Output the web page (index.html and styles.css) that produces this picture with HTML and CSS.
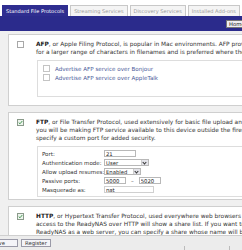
FILE: index.html
```html
<!DOCTYPE html>
<html>
<head>
<meta charset="utf-8">
<link rel="stylesheet" href="styles.css">
</head>
<body>
<div class="tabs">
  <div class="tab active">Standard File Protocols</div>
  <div class="tab">Streaming Services</div>
  <div class="tab">Discovery Services</div>
  <div class="tab">Installed Add-ons</div>
</div>
<div class="bar"><button class="home">Home</button></div>
<div class="content">
  <div class="card afp">
    <span class="cb"></span>
    <div class="body">
      <p class="desc"><b>AFP</b>, or Apple Filing Protocol, is popular in Mac environments. AFP provides support<br>for a larger range of characters in filenames and is preferred where the clients are Macs.</p>
      <div class="sub opts">
        <div class="opt"><span class="cb"></span>Advertise AFP service over Bonjour</div>
        <div class="opt"><span class="cb"></span>Advertise AFP service over AppleTalk</div>
      </div>
    </div>
  </div>
  <div class="card ftp">
    <span class="cb checked"><svg viewBox="0 0 7 7" width="5" height="5"><path d="M1 3.6 L2.8 5.3 L6 1.4" fill="none" stroke="#2a8a3a" stroke-width="1.2"/></svg></span>
    <div class="body">
      <p class="desc"><b>FTP</b>, or File Transfer Protocol, used extensively for basic file upload and download. If<br>you will be making FTP service available to this device outside the firewall, you can<br>specify a custom port for added security.</p>
      <div class="sub form">
        <div class="row"><span class="lbl">Port:</span><input class="in port" value="21"></div>
        <div class="row"><span class="lbl">Authentication mode:</span><span class="sel auth">User<i class="arr"></i></span></div>
        <div class="row"><span class="lbl">Allow upload resumes:</span><span class="sel resume">Enabled<i class="arr"></i></span></div>
        <div class="row"><span class="lbl">Passive ports:</span><input class="in pp" value="5000"><span class="dash">–</span><input class="in pp" value="5020"></div>
        <div class="row"><span class="lbl">Masquerade as:</span><input class="in masq" value="nat"></div>
      </div>
    </div>
  </div>
  <div class="card http">
    <span class="cb checked"><svg viewBox="0 0 7 7" width="5" height="5"><path d="M1 3.6 L2.8 5.3 L6 1.4" fill="none" stroke="#2a8a3a" stroke-width="1.2"/></svg></span>
    <div class="body">
      <p class="desc"><b>HTTP</b>, or Hypertext Transfer Protocol, used everywhere web browsers exist. Default<br>access to the ReadyNAS over HTTP will show a share list. If you want to use the<br>ReadyNAS as a web server, you can specify a share whose name will be the default.</p>
    </div>
  </div>
</div>
<div class="footer">
  <button class="btn first">Save</button>
  <button class="btn">Register</button>
  <span class="sep s1"></span>
  <span class="sep s2"></span>
</div>
</body>
</html>
```

FILE: styles.css
```css
html, body {
  margin: 0;
  padding: 0;
}
body {
  width: 242px;
  height: 250px;
  overflow: hidden;
  position: relative;
  background: #fff;
  font-family: "DejaVu Sans", Verdana, sans-serif;
  font-size: 5.85px;
  color: #333;
}
.tabs {
  display: flex;
  align-items: flex-end;
  gap: 2px;
  height: 16px;
  padding-left: 2px;
  box-sizing: border-box;
  white-space: nowrap;
  font-size: 5.1px;
}
.tab {
  height: 10px;
  line-height: 10px;
  padding: 0 3px;
  border: 1px solid #c8c8c8;
  border-bottom: none;
  background: #f4f4f4;
  color: #9a9a9a;
}
.tab.active {
  background: #2f2e90;
  border-color: #2f2e90;
  color: #fff;
}
.bar {
  height: 15px;
  background: #2b2b8c;
  display: flex;
  justify-content: flex-end;
  align-items: center;
}
.home {
  font: inherit;
  font-size: 5.3px;
  color: #222;
  height: 8px;
  line-height: 6px;
  padding: 0 2px;
  margin-right: -6px;
  background: #eeeef2;
  border: 1px solid #777;
  width: 22px;
  text-align: left;
}
.content {
  background: #f0f0f0;
  padding: 3px 0 0 8px;
  height: 230px;
}
.card {
  display: flex;
  width: 340px;
  background: #fff;
  border: 1px solid #cfcfcf;
  margin-bottom: 6px;
  padding: 5px 0 8px 8px;
}
.card.ftp {
  padding-bottom: 2px;
}
.cb {
  flex: none;
  width: 5px;
  height: 5px;
  border: 1px solid #a8a8a8;
  background: #fff;
  margin-top: 1px;
  display: flex;
  align-items: center;
  justify-content: center;
}
.cb.checked {
  background: #eef4ee;
  border-color: #8a9a8a;
}
.card > .cb {
  margin-right: 12px;
}
.body {
  flex: 1;
}
.desc {
  margin: 0;
  line-height: 8px;
  white-space: nowrap;
  color: #333;
}
.desc b {
  color: #222;
}
.sub {
  margin-top: 4px;
  margin-left: 1px;
  border: 1px solid #ddd;
  background: #fff;
}
.opts {
  padding: 3px 0 14px 5px;
}
.opt {
  display: flex;
  align-items: center;
  height: 9px;
  color: #4a5a9a;
  white-space: nowrap;
  font-size: 5.6px;
}
.opt .cb {
  margin: 0 5px 0 0;
  border-color: #c4c4c4;
}
.form {
  padding: 2px 0 2px 4px;
  font-size: 5.5px;
}
.row {
  display: flex;
  align-items: center;
  height: 9px;
  white-space: nowrap;
  color: #333;
}
.lbl {
  width: 62px;
  flex: none;
}
.in {
  font: inherit;
  font-size: 5.3px;
  height: 7px;
  box-sizing: border-box;
  border: 1px solid #b8b8b8;
  padding: 0 1px;
  margin: 0;
  color: #222;
  background: #fff;
}
.port { width: 32px; }
.pp { width: 22px; }
.masq { width: 50px; border-color: #d0d0d0; }
.dash {
  margin: 0 5px;
  color: #555;
}
.sel {
  display: inline-flex;
  align-items: center;
  justify-content: space-between;
  height: 7px;
  box-sizing: border-box;
  border: 1px solid #b8b8b8;
  padding-left: 1px;
  background: #fff;
  color: #222;
  font-size: 5.3px;
}
.auth { width: 45px; }
.resume { width: 37px; }
.arr {
  width: 6px;
  height: 5px;
  background: #e4e4ea;
  border-left: 1px solid #ccc;
  position: relative;
}
.arr::after {
  content: "";
  position: absolute;
  left: 1px;
  top: 1px;
  width: 2px;
  height: 2px;
  border-right: 1px solid #333;
  border-bottom: 1px solid #333;
  transform: rotate(45deg);
}
.footer {
  position: absolute;
  left: 0;
  right: 0;
  bottom: 0;
  height: 14px;
  background: #ececec;
  border-top: 1px solid #cfcfcf;
  display: flex;
  align-items: center;
  gap: 3px;
}
.btn {
  font: inherit;
  font-size: 5.3px;
  height: 8px;
  line-height: 6px;
  padding: 0 3px;
  background: #f4f4f8;
  border: 1px solid #9a9aa8;
  color: #333;
}
.btn.first {
  margin-left: -10px;
  width: 28px;
  padding-left: 1px;
  text-align: left;
}
.sep {
  position: absolute;
  bottom: 0;
  width: 1px;
  height: 4px;
  background: #bbb;
}
.s1 { left: 184px; }
.s2 { left: 229px; }
```
